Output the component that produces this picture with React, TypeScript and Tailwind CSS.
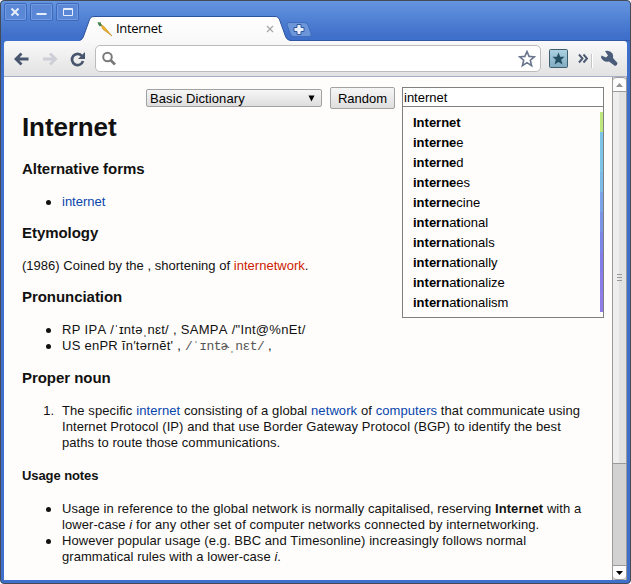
import type { ReactNode } from "react";

const suggestions: { bold: string; rest?: ReactNode; color: string }[] = [
  { bold: "Internet", color: "bg-[#bfe87c]" },
  { bold: "interne", rest: "e", color: "bg-[#7cc4e8]" },
  { bold: "interne", rest: "d", color: "bg-[#7cc4e8]" },
  { bold: "interne", rest: "es", color: "bg-[#7cbbe8]" },
  { bold: "interne", rest: "cine", color: "bg-[#7ca4e8]" },
  { bold: "intern", rest: <>a<b>t</b>ional</>, color: "bg-[#7c94e8]" },
  { bold: "intern", rest: <>a<b>t</b>ionals</>, color: "bg-[#7c86e8]" },
  { bold: "intern", rest: <>a<b>t</b>ionally</>, color: "bg-[#817ce8]" },
  { bold: "intern", rest: <>a<b>t</b>ionalize</>, color: "bg-[#8a7ce8]" },
  { bold: "intern", rest: <>a<b>t</b>ionalism</>, color: "bg-[#8f7ce8]" },
];

function WindowButton({ children }: { children: ReactNode }) {
  return (
    <div className="h-[18px] w-[23px] rounded-[2px] border border-[#3c69bc] bg-[#5a87d6] shadow-[inset_0_0_0_1px_#739bdf]">
      <svg width="21" height="16" viewBox="0 0 21 16" fill="none" stroke="#e6eefb">
        {children}
      </svg>
    </div>
  );
}

function TitleBar() {
  return (
    <div className="flex h-[40px] shrink-0">
      <div className="flex w-[79px] gap-[3px] pt-[2px] pl-[3px]">
        <WindowButton>
          <path d="M6.500 4.500l7 7M13.500 4.500l-7 7" strokeWidth="2" />
        </WindowButton>
        <WindowButton>
          <path d="M5.500 10h10" strokeWidth="2" />
        </WindowButton>
        <WindowButton>
          <path d="M6.500 4.500h9v7h-9zM6 5.500h10" />
        </WindowButton>
      </div>
      <div className="relative h-[40px] w-[211px]">
        <svg className="absolute inset-0" width="211" height="41" viewBox="80 1 211 41">
          <defs>
            <linearGradient id="tab" x1="0" y1="0" x2="0" y2="1">
              <stop offset="0" stopColor="#fff" />
              <stop offset="1" stopColor="#f8f8f8" />
            </linearGradient>
          </defs>
          <path d="M79 41C82 40 83 38 84 35L89 21C90 18 91 16.5 94 16.5H275C278 16.5 279 18 280 21L285 35C286 38 287 40 291 41V42H79Z" fill="url(#tab)" />
          <path d="M79 40.5C82 40 83 38 84 35L89 21C90 18 91 16.5 94 16.5H275C278 16.5 279 18 280 21L285 35C286 38 287 40 291 40.5" fill="none" stroke="#2e539c" />
        </svg>
        <div className="relative flex h-[24px] translate-y-[16px] items-center pl-[17px]">
          <svg width="16" height="16" viewBox="0 0 16 16">
            <path d="M4 3.5L7 5.5L15 15L5.5 8Z" fill="#f0b42a" stroke="#b98324" strokeWidth=".6" />
            <path d="M0.5 1L3 1.5L3.5 0.5L4 3L5 4L3 5.5L1.5 4Z" fill="#43834a" />
          </svg>
          <span className="-mt-[2px] ml-[3px] w-[150px] font-['Open_Sans',sans-serif] text-[13px] leading-[16px] tracking-[-0.350px] text-black">Internet</span>
          <svg width="9" height="9" viewBox="0 0 9 9" stroke="#a9a9a9" strokeWidth="1.400">
            <path d="M1 1l6 6M7 1L1 7" />
          </svg>
        </div>
      </div>
      <svg className="mt-[20px] -ml-[5px]" width="27" height="17" viewBox="286 21 27 17">
        <path d="M289 22.500H304Q307 22.500 308 25L311 33.500Q312 36.500 309 36.500H294Q291.500 36.500 290.500 34L287 25Q286.500 22.500 289 22.500Z" fill="#6c95da" stroke="#416ebc" />
        <path d="M297 24.500h4v3h3v4h-3v3h-4v-3h-3v-4h3z" fill="#e9effa" stroke="#34599c" />
      </svg>
      <div className="mt-[39px] -ml-[22px] h-px flex-1 bg-[#3357a4]" />
    </div>
  );
}

function Toolbar() {
  return (
    <div className="flex h-[36px] shrink-0 items-center rounded-t-[3px] border-b border-[#a5b0c6] bg-linear-to-b from-[#f9f9f9] to-[#e2e2e2]">
      <svg width="91" height="34" viewBox="4 41 91 34" fill="none">
        <path d="M28.500 58H17M21.500 52.500L16 58L21.500 63.500" stroke="#47566d" strokeWidth="2.800" />
        <path d="M43 58H54.500M50 52.500L55.500 58L50 63.500" stroke="#cdced6" strokeWidth="2.800" />
        <path d="M82 55A5.600 5.600 0 1 0 83 60" stroke="#47566d" strokeWidth="2.700" />
        <path d="M85 51V58H78Z" fill="#47566d" />
      </svg>
      <div className="flex h-[27px] w-[446px] items-center justify-between rounded-[5px] border border-[#bcbdbb] bg-white pr-[4px] pl-[5px]">
        <svg width="16" height="16" viewBox="0 0 16 16" fill="none" stroke="#7a7a7a">
          <circle cx="6.500" cy="6" r="4.300" strokeWidth="2" />
          <path d="M9.500 9L14 13.500" strokeWidth="2.700" />
        </svg>
        <svg width="18" height="18" viewBox="0 0 18 18" fill="#fff" stroke="#68758d" strokeWidth="1.600">
          <path d="M9 1.500L11.100 6.400L16.300 6.800L12.300 10.200L13.600 15.700L9 12.700L4.400 15.700L5.700 10.200L1.700 6.800L6.900 6.400Z" />
        </svg>
      </div>
      <svg width="86" height="35" viewBox="541 41 86 35">
        <defs>
          <linearGradient id="bookmark" x1="0" y1="0" x2="0" y2="1">
            <stop offset="0" stopColor="#add2e3" />
            <stop offset="1" stopColor="#82abc1" />
          </linearGradient>
        </defs>
        <rect x="549.500" y="49.500" width="18" height="18" rx="1" fill="url(#bookmark)" stroke="#3d5e6e" />
        <path d="M558.500 52.500L560.200 56.700H564.500L561.200 59.700L562.500 64.500L558.500 62L554.500 64.500L555.800 59.700L552.500 56.700H556.800Z" fill="#244f63" />
        <path d="M579 54.500L582.500 58.500L579 62.500M583.500 54.500L587 58.500L583.500 62.500" fill="none" stroke="#4b5972" strokeWidth="1.900" />
        <path d="M591.500 54V68" stroke="#c6c6c6" />
        <path d="M592.500 54V68" stroke="#fff" />
        <path d="M605 51Q610 50 612.500 53.500Q613.500 56 613 58L617.500 63Q617.500 65.500 615 66L609 61.500Q603 62.500 601 57.500L601.500 55.500L606 57.500L608 55.500Z" fill="#4b5c7b" />
      </svg>
    </div>
  );
}

function Controls() {
  return (
    <div className="flex h-[22px] items-start pl-[124px] text-[13px] text-black">
      <div className="mt-[2px] flex h-[18px] w-[176px] items-center justify-between rounded-[2px] border border-[#a1a1a1] bg-linear-to-b from-[#f6f6f6] to-[#dedede] pr-[6px] pl-[3px]">
        <span className="translate-y-px leading-[16px] tracking-[0.100px]">Basic Dictionary</span>
        <svg width="7" height="7" viewBox="0 0 7 7"><path d="M0.500 0.500H6.500L3.500 6.500Z" /></svg>
      </div>
      <button className="ml-[8px] h-[22px] w-[65px] rounded-[2px] border border-[#a1a1a1] bg-linear-to-b from-[#f6f6f6] to-[#dedede] leading-[19px]">Random</button>
      <div className="relative ml-[7px] h-[20px] w-[202px] border border-[#808080] bg-white pl-px leading-[19px]">
        internet
        <div className="absolute top-[18px] -left-px flex h-[212px] w-[202px] flex-col border border-[#808080] bg-[#fffdfb] pt-[5px]">
          {suggestions.map((s, i) => (
            <div key={i} className="flex h-[20px] justify-between pl-[10px] leading-[22px]">
              <span><b>{s.bold}</b>{s.rest}</span>
              <span className={`w-[3px] ${s.color}`} />
            </div>
          ))}
        </div>
      </div>
    </div>
  );
}

function Link({ children }: { children: ReactNode }) {
  return <a className="text-[#0645ad]">{children}</a>;
}

function Section({ children }: { children: ReactNode }) {
  return <h3 className="text-[15px] leading-[17px] font-bold tracking-[-0.050px]">{children}</h3>;
}

function Item({ marker, children }: { marker?: string; children: ReactNode }) {
  return (
    <li className="flex">
      <span className="flex w-[40px] shrink-0 justify-end">
        {marker ? <span className="mr-[8px]">{marker}</span> : <i className="mt-[6px] mr-[11px] h-[5px] w-[5px] rounded-full bg-[#111]" />}
      </span>
      <span className="whitespace-nowrap">{children}</span>
    </li>
  );
}

function Article() {
  return (
    <div className="min-w-0 flex-1 pt-[10px] pl-[18px] [font-kerning:none]">
      <Controls />
      <h1 className="mt-[3px] text-[26px] leading-[30px] font-bold tracking-[-0.100px]">Internet</h1>
      <div className="mt-[18px]"><Section>Alternative forms</Section></div>
      <ul className="mt-[17px]"><Item><Link>internet</Link></Item></ul>
      <div className="mt-[14px]"><Section>Etymology</Section></div>
      <p className="mt-[17px] tracking-[0.020px]">(1986) Coined by the , shortening of <a className="text-[#cc2200]">internetwork</a>.</p>
      <div className="mt-[14px]"><Section>Pronunciation</Section></div>
      <ul className="mt-[17px]">
        <Item><span className="tracking-[0.300px]">RP IPA /ˈɪntəˌnɛt/ , SAMPA /"Int@%nEt/</span></Item>
        <Item><span className="tracking-[0.250px]">US enPR ĭn′tərnĕt' , </span><span className="font-['Liberation_Mono','DejaVu_Sans_Mono',monospace] text-[13px] leading-none tracking-[-0.600px] text-[#555]">/ˈɪntɚˌnɛt/</span><span className="tracking-[0.250px]"> ,</span></Item>
      </ul>
      <div className="mt-[15px]"><Section>Proper noun</Section></div>
      <ol className="mt-[17px]">
        <Item marker="1.">
          <span className="tracking-[0.090px]">The specific <Link>internet</Link> consisting of a global <Link>network</Link> of <Link>computers</Link> that communicate using</span><br />
          <span className="tracking-[0.070px]">Internet Protocol (IP) and that use Border Gateway Protocol (BGP) to identify the best</span><br />
          <span className="tracking-[0.060px]">paths to route those communications.</span>
        </Item>
      </ol>
      <h4 className="mt-[17px] font-bold tracking-[-0.080px]">Usage notes</h4>
      <ul className="mt-[17px] tracking-[0.060px]">
        <Item>
          Usage in reference to the global network is normally capitalised, reserving <b>Internet</b> with a<br />
          <span className="tracking-[0.075px]">lower-case <i>i</i> for any other set of computer networks connected by internetworking.</span>
        </Item>
        <Item>
          However popular usage (e.g. BBC and Timesonline) increasingly follows normal<br />
          grammatical rules with a lower-case <i>i</i>.
        </Item>
      </ul>
    </div>
  );
}

function Scrollbar() {
  return (
    <div className="flex w-[15px] shrink-0 flex-col border-x border-[#9a9a9a] bg-[#d2d2d2]">
      <div className="flex h-[15px] items-center justify-center rounded-t-[4px] border-t border-b border-[#9a9a9a] bg-[#fcfcfc]">
        <svg width="7" height="4" viewBox="0 0 7 4" fill="#939393"><path d="M3.500 0L7 4H0Z" /></svg>
      </div>
      <div className="flex h-[372px] flex-col items-center justify-center gap-[2px] border-b border-[#9a9a9a] bg-linear-to-r from-[#eee] from-50% to-[#e2e2e2] to-50%">
        <i className="h-px w-[5px] bg-[#999]" />
        <i className="h-px w-[5px] bg-[#999]" />
        <i className="h-px w-[5px] bg-[#999]" />
      </div>
      <div className="mt-auto flex h-[15px] items-center justify-center rounded-b-[4px] border-t border-b border-[#9a9a9a] bg-[#fcfcfc]">
        <svg width="7" height="4" viewBox="0 0 7 4"><path d="M0 0H7L3.500 4Z" /></svg>
      </div>
    </div>
  );
}

export default function App() {
  return (
    <div className="h-[584px] w-[631px] overflow-hidden bg-white">
      <div className="flex h-full flex-col rounded-[4px] border border-[#454b56] bg-[#3d6fcb] bg-[linear-gradient(#6595df,#4070ca_34px,#3d6fcb_41px)] font-['Liberation_Sans',Arial,sans-serif]">
        <TitleBar />
        <div className="mx-[3px] mb-[3px] flex min-h-0 flex-1 flex-col">
          <Toolbar />
          <div className="flex min-h-0 flex-1 bg-[#fffdfb] text-[13px] leading-[16px] text-[#111]">
            <Article />
            <Scrollbar />
          </div>
        </div>
      </div>
    </div>
  );
}
